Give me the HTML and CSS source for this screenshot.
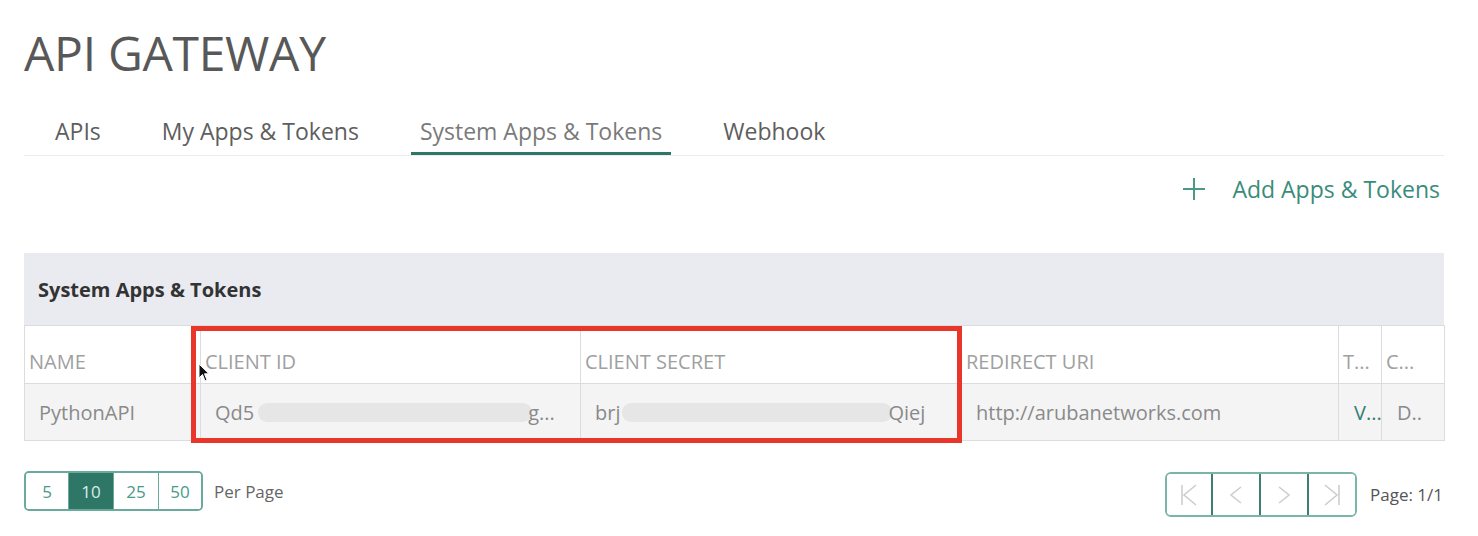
FILE: index.html
```html
<!DOCTYPE html>
<html lang="en">
<head>
<meta charset="utf-8">
<title>API Gateway</title>
<link rel="stylesheet" href="styles.css">
</head>
<body>
<div class="page">
  <h1 class="title">API GATEWAY</h1>

  <nav class="tabs">
    <a class="tab">APIs</a>
    <a class="tab">My Apps &amp; Tokens</a>
    <a class="tab active">System Apps &amp; Tokens</a>
    <a class="tab">Webhook</a>
  </nav>

  <div class="add-row">
    <a class="add-btn">
      <svg class="plus" width="22" height="22" viewBox="0 0 22 22"><path d="M11 0V22M0 11H22" stroke="currentColor" stroke-width="2" fill="none"/></svg>
      <span>Add Apps &amp; Tokens</span>
    </a>
  </div>

  <section class="panel">
    <div class="panel-head">System Apps &amp; Tokens</div>
    <div class="table-wrap">
      <table class="grid">
        <colgroup>
          <col class="c-name"><col class="c-id"><col class="c-secret"><col class="c-uri"><col class="c-t"><col class="c-c">
        </colgroup>
        <thead>
          <tr>
            <th>NAME</th>
            <th>CLIENT ID</th>
            <th>CLIENT SECRET</th>
            <th>REDIRECT URI</th>
            <th>T...</th>
            <th>C...</th>
          </tr>
        </thead>
        <tbody>
          <tr>
            <td>PythonAPI</td>
            <td><div class="masked"><span>Qd5</span><span class="blur b-id"></span><span>g...</span></div></td>
            <td><div class="masked"><span>brj</span><span class="blur b-secret"></span><span>Qiej</span></div></td>
            <td>http://arubanetworks.com</td>
            <td class="link">V...</td>
            <td>D..</td>
          </tr>
        </tbody>
      </table>
      <div class="highlight"></div>
      <svg class="cursor" width="12" height="20" viewBox="0 0 12 20"><path d="M1 1L1 15L4.5 11.5L7 18L9 17L6.5 10.8L11 10.8Z" fill="#111" stroke="#fff" stroke-width="1"/></svg>
    </div>
  </section>

  <div class="pager">
    <div class="sizes-wrap">
      <div class="sizes">
        <button class="size">5</button>
        <button class="size active">10</button>
        <button class="size">25</button>
        <button class="size">50</button>
      </div>
      <span class="per-page">Per Page</span>
    </div>
    <div class="nav-wrap">
      <div class="navs">
        <button class="nav"><svg width="20" height="22" viewBox="0 0 20 22"><path d="M3 1V21M17 1L5 11L17 21" stroke="currentColor" stroke-width="1.6" fill="none"/></svg></button>
        <button class="nav"><svg width="20" height="22" viewBox="0 0 20 22"><path d="M15 3L5 11L15 19" stroke="currentColor" stroke-width="1.6" fill="none"/></svg></button>
        <button class="nav"><svg width="20" height="22" viewBox="0 0 20 22"><path d="M5 3L15 11L5 19" stroke="currentColor" stroke-width="1.6" fill="none"/></svg></button>
        <button class="nav"><svg width="20" height="22" viewBox="0 0 20 22"><path d="M3 1L15 11L3 21M17 1V21" stroke="currentColor" stroke-width="1.6" fill="none"/></svg></button>
      </div>
      <span class="page-count">Page: 1/1</span>
    </div>
  </div>
</div>
</body>
</html>
```
FILE: styles.css
```css
* { box-sizing: border-box; }
html, body { margin: 0; padding: 0; background: #fff; }
body { font-family: "Open Sans", "Noto Sans", sans-serif; color: #666; }

.page { width: 1444px; padding-left: 24px; }

.title {
  margin: 0;
  padding-top: 20px;
  font-size: 48px;
  font-weight: 400;
  line-height: 65px;
  color: #585858;
  letter-spacing: -0.3px;
}

.tabs {
  display: flex;
  gap: 43px;
  margin-top: 29px;
  padding-left: 22px;
  border-bottom: 1px solid #ececec;
}
.tab {
  display: block;
  padding: 1px 9px 5px;
  font-size: 23px;
  line-height: 32px;
  color: #5e5e5e;
  border-bottom: 3px solid transparent;
}
.tab.active { color: #7a7a7a; border-bottom-color: #2c7767; }

.add-row { display: flex; justify-content: flex-end; margin-top: 17px; padding-right: 4px; }
.add-btn { display: flex; align-items: center; gap: 27px; color: #3b8b7b; font-size: 23px; line-height: 32px; }
.plus { color: #4a9a88; }

.panel { margin-top: 48px; }
.panel-head {
  height: 72px;
  display: flex;
  align-items: center;
  padding-left: 14px;
  background: #e9ebf0;
  font-size: 20px;
  font-weight: 700;
  color: #333;
}

.table-wrap { position: relative; }
.grid {
  width: 100%;
  border-collapse: collapse;
  table-layout: fixed;
  font-size: 20px;
}
.c-name { width: 176px; }
.c-id { width: 380px; }
.c-secret { width: 381px; }
.c-uri { width: 377px; }
.c-t { width: 43px; }
.c-c { width: 63px; }

.grid th, .grid td {
  border: 1px solid #dcdcdc;
  text-align: left;
  white-space: nowrap;
  overflow: hidden;
}
.grid th {
  height: 58px;
  padding: 14px 4px 0;
  font-weight: 400;
  color: #a0a0a0;
  background: #fff;
}
.grid td {
  height: 57px;
  padding: 0 14px;
  color: #8a8a8a;
  background: #f4f4f4;
}
.grid td.link { color: #2f7f6f; }
.grid td:nth-child(5), .grid td:nth-child(6) { padding: 0 0 0 15px; }

.masked { display: flex; align-items: center; }
.blur { display: block; height: 19px; border-radius: 9px; background: #e6e6e6; flex: none; }
.b-id { width: 274px; margin: 0 -4px 0 4px; }
.b-secret { width: 270px; margin: 0 -4px 0 2px; }

.highlight {
  position: absolute;
  left: 167px;
  top: 1px;
  width: 771px;
  height: 117px;
  border: 5px solid #e8362a;
  pointer-events: none;
}
.cursor { position: absolute; left: 174px; top: 38px; }

.pager {
  display: flex;
  justify-content: space-between;
  align-items: flex-start;
  margin-top: 30px;
}
.sizes-wrap, .nav-wrap { display: flex; align-items: center; }
.sizes {
  display: flex;
  border: 2px solid #6aaa9c;
  border-radius: 5px;
  overflow: hidden;
}
.size {
  width: 45px;
  height: 36px;
  border: 0;
  border-left: 1px solid #6aaa9c;
  background: #fff;
  font-family: inherit;
  font-size: 17px;
  color: #4a9a88;
  padding: 0;
}
.size:first-child { border-left: 0; width: 42px; }
.size:last-child { width: 43px; }
.size.active { background: #2e7767; color: #d8ece7; }
.per-page { margin-left: 11px; font-size: 17px; color: #666; }

.nav-wrap { margin-top: 1px; padding-right: 1px; }
.navs {
  display: flex;
  border: 2px solid #7ab5a8;
  border-radius: 6px;
  overflow: hidden;
}
.nav {
  width: 48px;
  height: 41px;
  border: 0;
  border-left: 2px solid #3f7f72;
  background: #fff;
  color: #cdcdcd;
  padding: 0;
  display: flex;
  align-items: center;
  justify-content: center;
}
.nav:first-child { border-left: 0; width: 44px; }
.page-count { margin-left: 13px; font-size: 17px; color: #555; }
```
